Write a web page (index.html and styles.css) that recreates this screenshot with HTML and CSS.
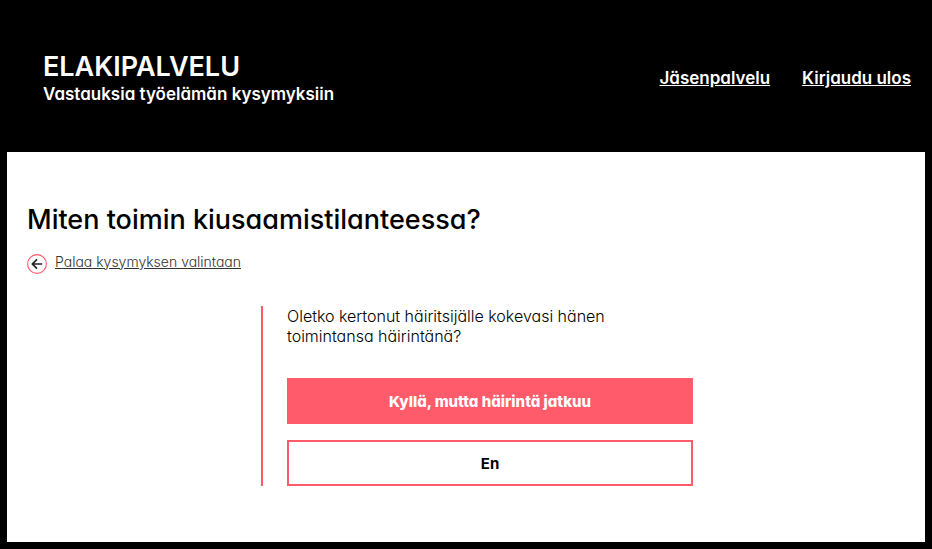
FILE: index.html
```html
<!DOCTYPE html>
<html lang="fi">
<head>
    <meta charset="UTF-8">
    <meta name="viewport" content="width=device-width, initial-scale=1.0">
    <title>eLakipalvelu</title>
    <link rel="stylesheet" href="styles.css">
</head>
<body>
    <header class="header">
        <div class="brand">
            <div class="brand-name">ELAKIPALVELU</div>
            <div class="brand-slogan">Vastauksia työelämän kysymyksiin</div>
        </div>
        <nav class="nav">
            <a href="#">Jäsenpalvelu</a>
            <a href="#">Kirjaudu ulos</a>
        </nav>
    </header>

    <main class="content">
        <h1>Miten toimin kiusaamistilanteessa?</h1>

        <a href="#" class="back-link">
            <svg class="back-icon" viewBox="0 0 20 20" width="20" height="20" aria-hidden="true">
                <circle cx="10" cy="10" r="9.4" fill="none" stroke="#ff5b6a" stroke-width="1.1"/>
                <path d="M15.2 10H5.8M10 5.4L5.4 10l4.6 4.6" fill="none" stroke="#222" stroke-width="1.7"/>
            </svg>
            <span>Palaa kysymyksen valintaan</span>
        </a>

        <section class="question">
            <p>Oletko kertonut häiritsijälle kokevasi hänen toimintansa häirintänä?</p>
            <button type="button" class="btn btn-selected">Kyllä, mutta häirintä jatkuu</button>
            <button type="button" class="btn">En</button>
        </section>
    </main>
</body>
</html>
```
FILE: styles.css
```css
* {
    margin: 0;
    padding: 0;
    box-sizing: border-box;
}

body {
    display: flex;
    flex-direction: column;
    min-height: 100vh;
    padding: 0 7px 7px;
    background: #000;
    color: #000;
    font-family: Inter, "Open Sans", sans-serif;
    font-feature-settings: "cv11";
}

.header {
    display: flex;
    justify-content: space-between;
    align-items: center;
    padding: 51px 14px 47px 36px;
    color: #fff;
}

.brand-name {
    font-size: 27px;
    font-weight: 600;
    line-height: 32px;
}

.brand-slogan {
    font-size: 17px;
    font-weight: 600;
    line-height: 22px;
}

.nav a {
    color: #fff;
    font-size: 17px;
    font-weight: 600;
    line-height: 22px;
}

.nav {
    display: flex;
    gap: 32px;
}

.content {
    flex: 1;
    padding: 48px 20px 56px;
    background: #fff;
}

h1 {
    font-size: 27px;
    font-weight: 500;
    line-height: 40px;
}

.back-link {
    display: inline-flex;
    gap: 8px;
    margin-top: 12px;
    color: #333;
    font-size: 14px;
    font-weight: 300;
    line-height: 20px;
}

.back-icon {
    margin-top: 2px;
}

.question {
    display: flex;
    flex-direction: column;
    gap: 16px;
    max-width: 432px;
    margin: 28px auto 0 234px;
    padding-left: 24px;
    border-left: 2px solid #ff5b6a;
}

.question p {
    max-width: 360px;
    margin-bottom: 16px;
    font-size: 16px;
    font-weight: 300;
    line-height: 20px;
}

.btn {
    width: 100%;
    padding: 12px 16px 10px;
    border: 2px solid #ff5b6a;
    background: #fff;
    color: #000;
    font-family: inherit;
    font-feature-settings: inherit;
    font-size: 15px;
    font-weight: 700;
    line-height: 20px;
    cursor: pointer;
}

.btn-selected {
    background: #ff5b6a;
    color: #fff;
    font-weight: 800;
}
```
